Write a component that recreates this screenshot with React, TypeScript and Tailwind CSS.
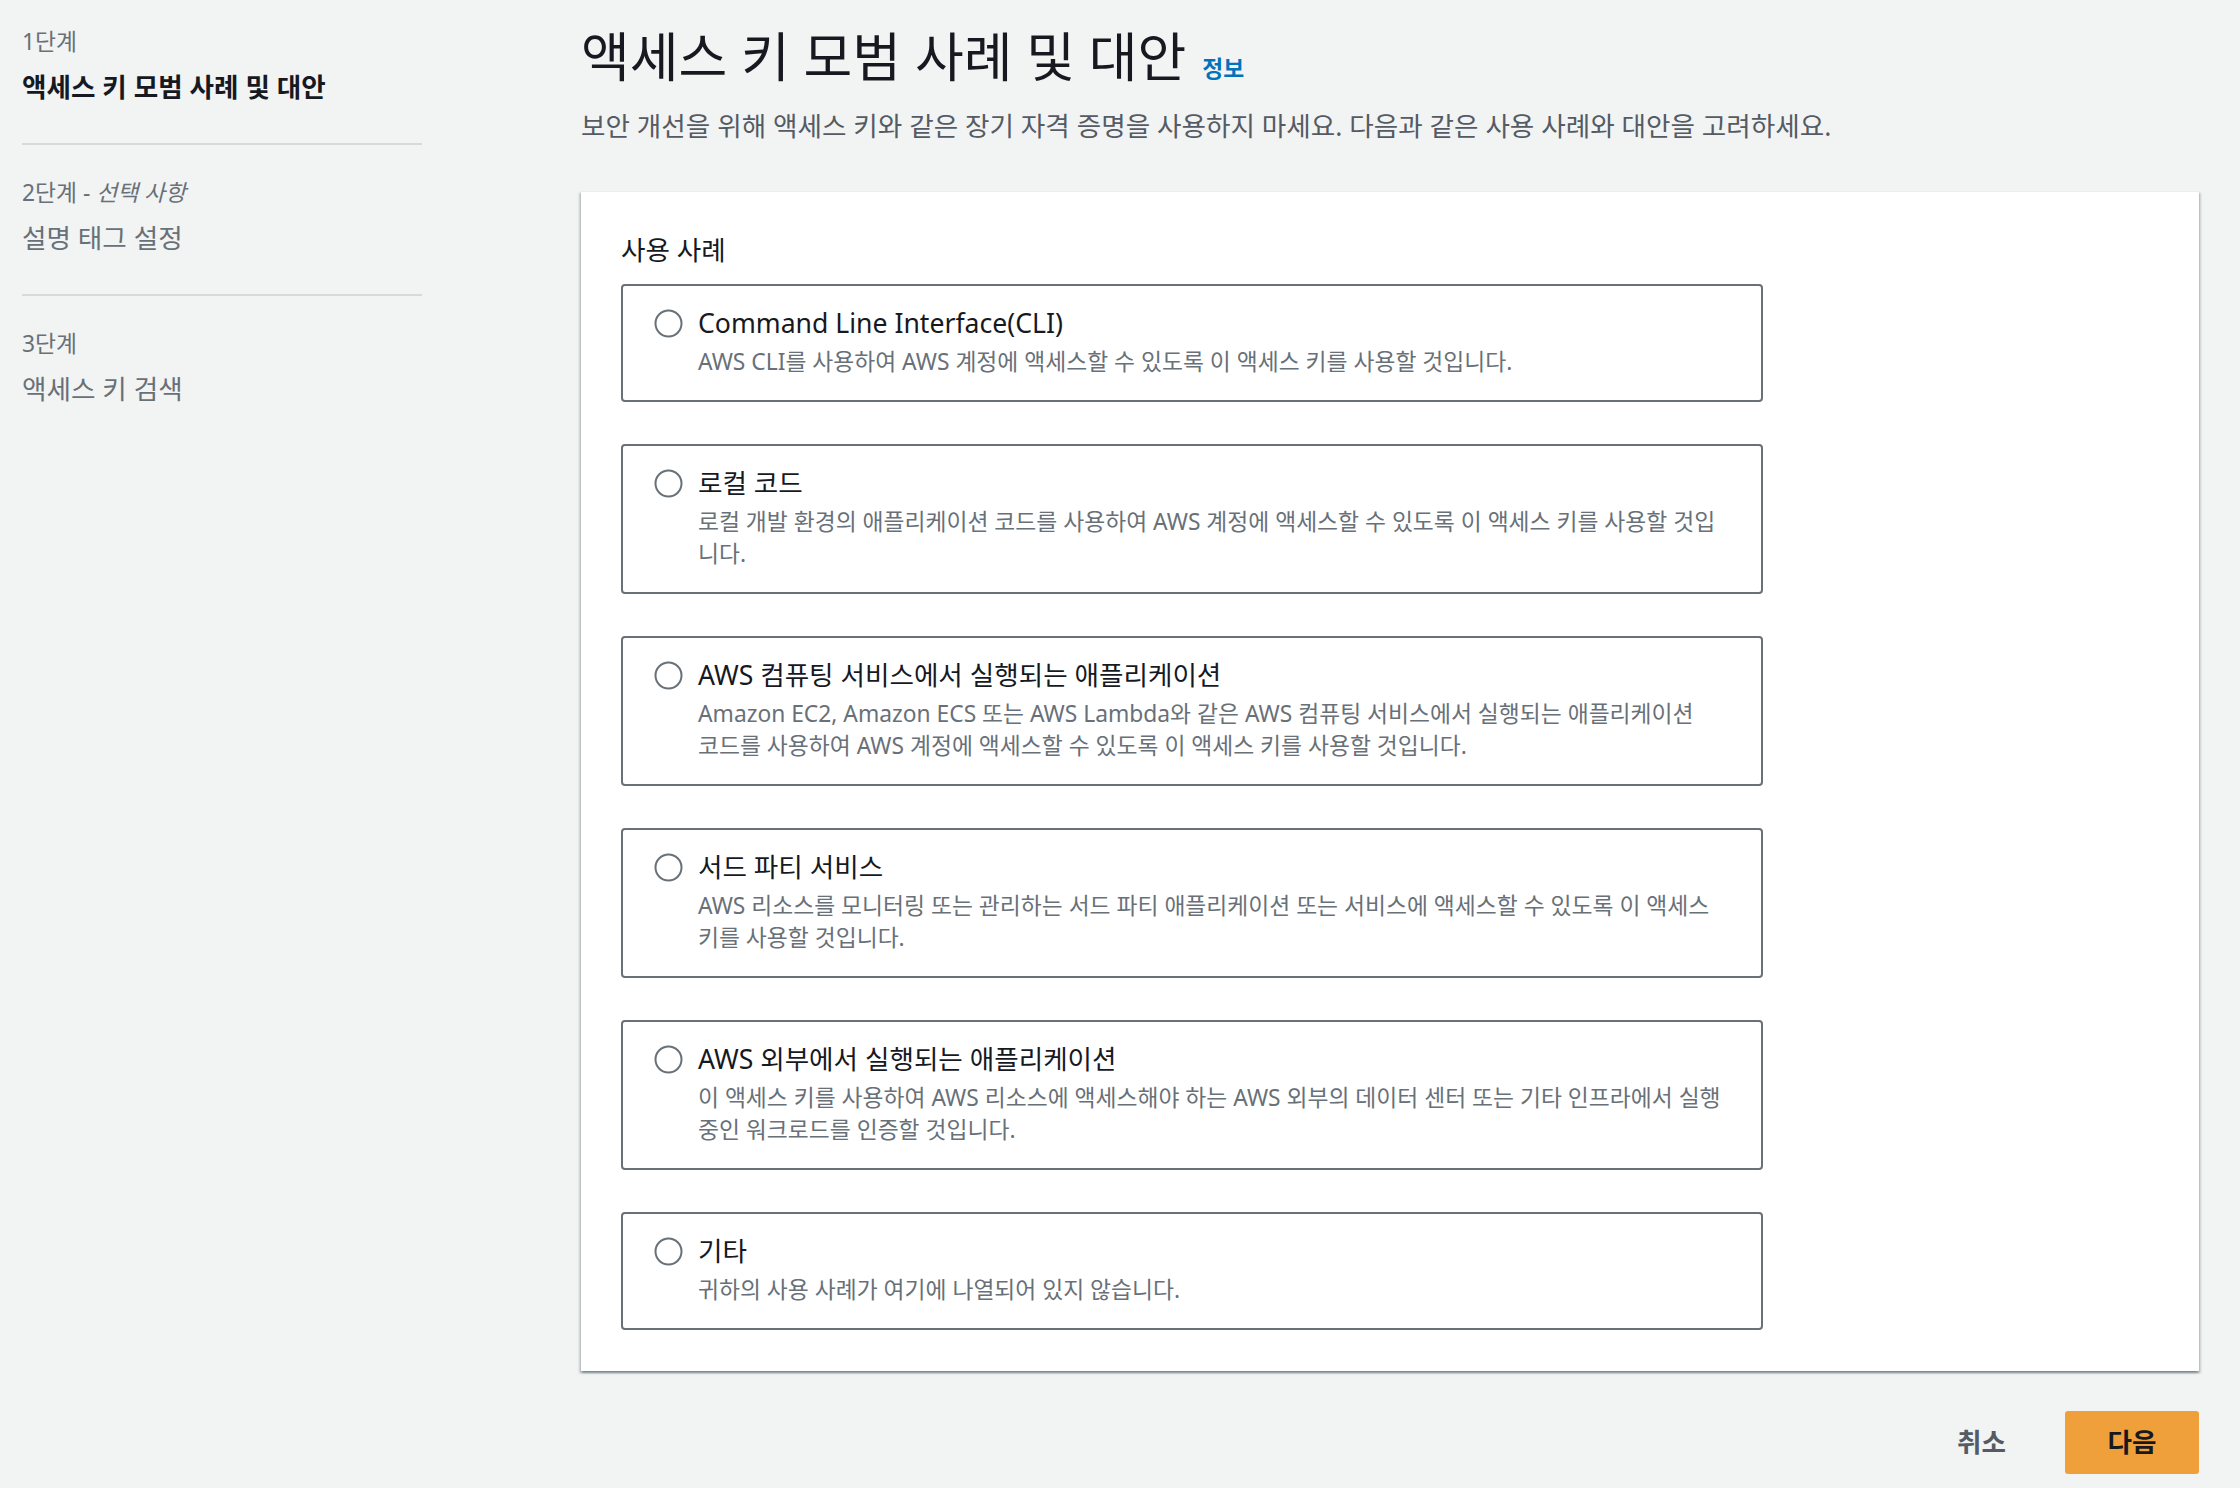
import React, { useState } from "react";

type UseCase = {
    id: string;
    title: string;
    lines: string[];
};

const USE_CASES: UseCase[] = [
    {
        id: "cli",
        title: "Command Line Interface(CLI)",
        lines: ["AWS CLI를 사용하여 AWS 계정에 액세스할 수 있도록 이 액세스 키를 사용할 것입니다."]
    },
    {
        id: "local",
        title: "로컬 코드",
        lines: [
            "로컬 개발 환경의 애플리케이션 코드를 사용하여 AWS 계정에 액세스할 수 있도록 이 액세스 키를 사용할 것입",
            "니다."
        ]
    },
    {
        id: "compute",
        title: "AWS 컴퓨팅 서비스에서 실행되는 애플리케이션",
        lines: [
            "Amazon EC2, Amazon ECS 또는 AWS Lambda와 같은 AWS 컴퓨팅 서비스에서 실행되는 애플리케이션",
            "코드를 사용하여 AWS 계정에 액세스할 수 있도록 이 액세스 키를 사용할 것입니다."
        ]
    },
    {
        id: "third",
        title: "서드 파티 서비스",
        lines: [
            "AWS 리소스를 모니터링 또는 관리하는 서드 파티 애플리케이션 또는 서비스에 액세스할 수 있도록 이 액세스",
            "키를 사용할 것입니다."
        ]
    },
    {
        id: "outside",
        title: "AWS 외부에서 실행되는 애플리케이션",
        lines: [
            "이 액세스 키를 사용하여 AWS 리소스에 액세스해야 하는 AWS 외부의 데이터 센터 또는 기타 인프라에서 실행",
            "중인 워크로드를 인증할 것입니다."
        ]
    },
    {
        id: "other",
        title: "기타",
        lines: ["귀하의 사용 사례가 여기에 나열되어 있지 않습니다."]
    }
];

const Step: React.FC<{ label: React.ReactNode; title: string; active?: boolean; last?: boolean }> = ({
    label,
    title,
    active,
    last
}) => (
    <div className={`${last ? "" : "pb-[38px] border-b-2 border-[#d5dbdb]"}`}>
        <div className="text-[22.8px] leading-[28px] text-[#687078]">{label}</div>
        <div
            className={`mt-[14px] text-[26.6px] leading-[35px] ${active ? "font-bold text-[#16191f]" : "text-[#687078]"}`}
        >
            {title}
        </div>
    </div>
);

const Radio: React.FC<{ checked: boolean }> = ({ checked }) => (
    <svg width="29" height="29" viewBox="0 0 29 29" className="shrink-0">
        <circle cx="14.5" cy="14.5" r="13" fill="white" stroke={checked ? "#0073bb" : "#687078"} strokeWidth={checked ? 6 : 2} />
    </svg>
);

export default function App() {
    const [selected, setSelected] = useState<string | null>(null);

    return (
        <div className="min-h-screen w-full bg-[#f2f3f3] font-['Noto_Sans','Noto_Sans_CJK_KR',sans-serif] flex">
            {/* Wizard steps */}
            <nav className="w-[422px] shrink-0 pl-[22px] pt-[28px] flex flex-col">
                <Step label="1단계" title="액세스 키 모범 사례 및 대안" active />
                <div className="pt-[34px]">
                    <Step
                        label={
                            <>
                                2단계 - <span className="italic">선택 사항</span>
                            </>
                        }
                        title="설명 태그 설정"
                    />
                </div>
                <div className="pt-[34px]">
                    <Step label="3단계" title="액세스 키 검색" last />
                </div>
            </nav>

            <main className="flex-1 ml-[159px] mr-[41px] pt-[27px] flex flex-col">
                <div className="flex items-baseline gap-[16px]">
                    <h1 className="text-[53px] leading-[60px] text-[#16191f]">액세스 키 모범 사례 및 대안</h1>
                    <a className="text-[22.8px] font-bold text-[#0073bb] cursor-pointer">정보</a>
                </div>
                <p className="mt-[22px] text-[26.6px] leading-[35px] text-[#545b64]">
                    보안 개선을 위해 액세스 키와 같은 장기 자격 증명을 사용하지 마세요. 다음과 같은 사용 사례와 대안을 고려하세요.
                </p>

                <section className="mt-[47px] bg-white pl-[40px] pt-[41px] pb-[41px] shadow-[0_2px_2px_0_rgba(0,28,36,0.3),2px_2px_2px_0_rgba(0,28,36,0.15),-2px_2px_2px_0_rgba(0,28,36,0.15)] border-t border-[#eaeded]">
                    <div className="text-[26.6px] leading-[35px] text-[#16191f]">사용 사례</div>
                    <div className="mt-[16px] w-[1142px] flex flex-col gap-[42px]">
                        {USE_CASES.map((uc) => (
                            <label
                                key={uc.id}
                                onClick={() => setSelected(uc.id)}
                                className={`flex gap-[15px] border-2 rounded-[4px] pl-[31px] pt-[20px] pb-[22px] cursor-pointer ${
                                    selected === uc.id ? "border-[#0073bb] bg-[#f1faff]" : "border-[#687078] bg-white"
                                }`}
                            >
                                <div className="h-[35px] flex items-center">
                                    <Radio checked={selected === uc.id} />
                                </div>
                                <div className="flex flex-col">
                                    <div className="text-[26.6px] leading-[35px] text-[#16191f]">{uc.title}</div>
                                    <div className="mt-[5px] text-[22.8px] leading-[32px] text-[#687078]">
                                        {uc.lines.map((line) => (
                                            <div key={line} className="whitespace-nowrap">
                                                {line}
                                            </div>
                                        ))}
                                    </div>
                                </div>
                            </label>
                        ))}
                    </div>
                </section>

                <div className="mt-[40px] flex justify-end gap-[16px]">
                    <button className="h-[63px] px-[43px] text-[26.6px] font-bold text-[#545b64] rounded-[3px]">
                        취소
                    </button>
                    <button className="h-[63px] w-[134px] text-[26.6px] font-bold text-[#16191f] bg-[#f0a03a] rounded-[3px]">
                        다음
                    </button>
                </div>
            </main>
        </div>
    );
}
